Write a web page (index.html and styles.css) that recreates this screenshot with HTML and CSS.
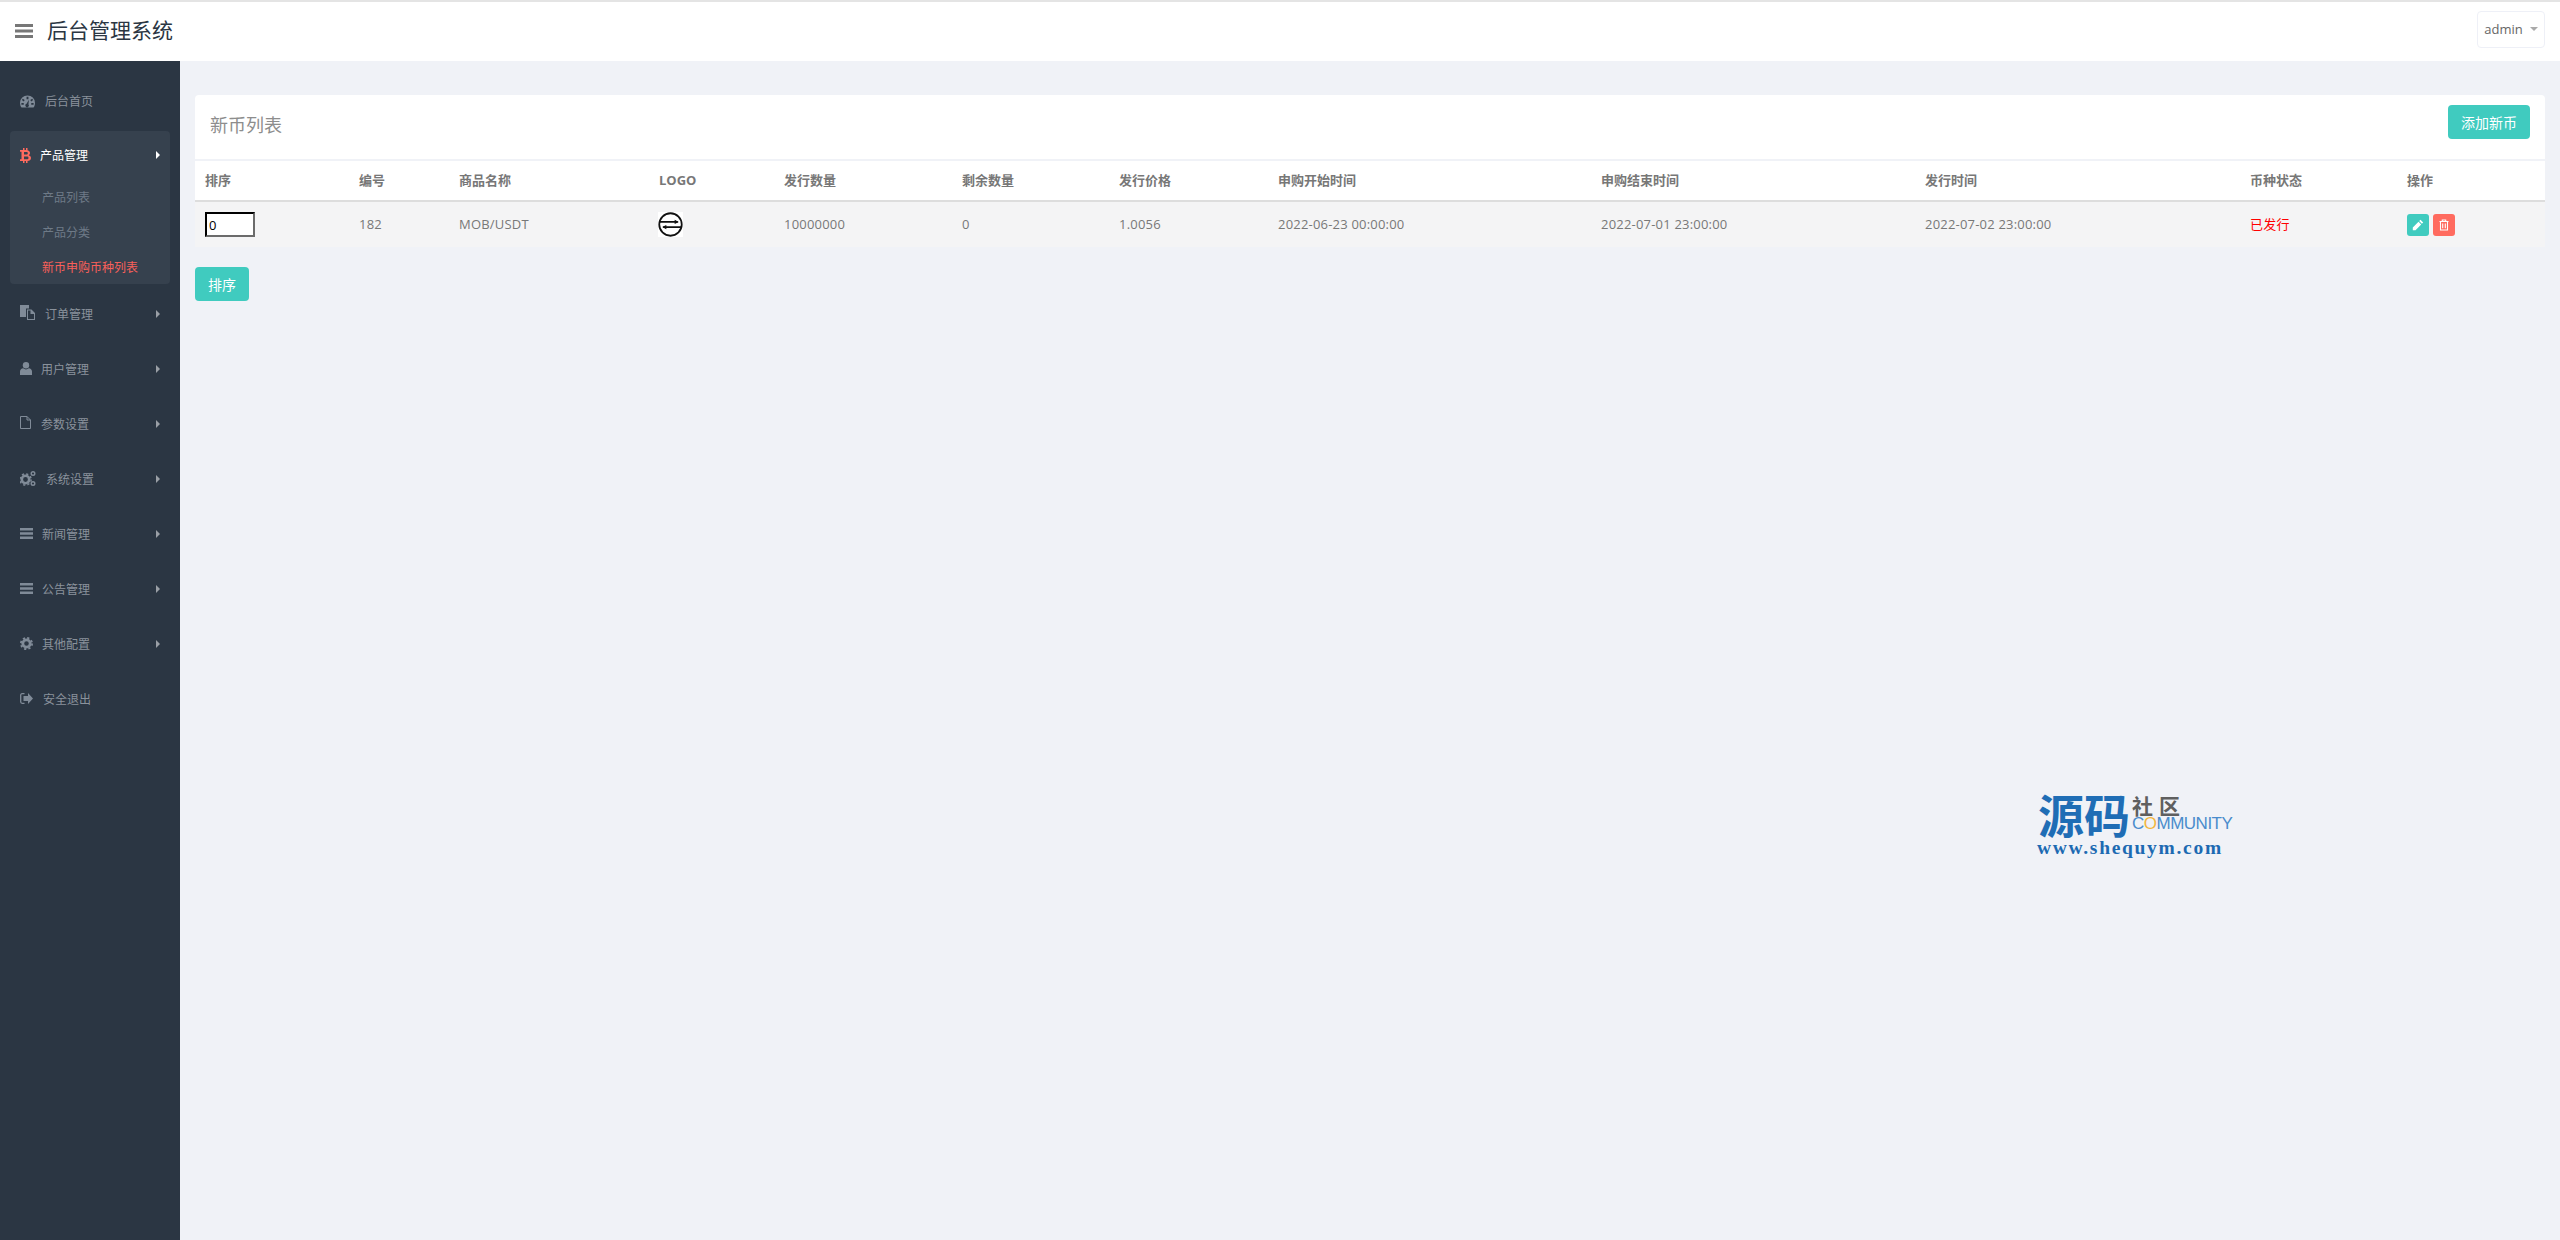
FILE: index.html
```html
<!DOCTYPE html>
<html lang="zh">
<head>
<meta charset="utf-8">
<title>后台管理系统</title>
<link rel="stylesheet" href="styles.css">
</head>
<body>
<header class="topbar">
  <div class="brand">
    <svg class="burger" viewBox="0 0 18 14"><path d="M0 0h18v3H0zM0 5.500h18v3H0zM0 11h18v3H0z"/></svg>
    <span class="brand-title">后台管理系统</span>
  </div>
  <button class="user-btn">admin<span class="caret"></span></button>
</header>
<div class="shell">
  <nav class="sidebar">
    <a class="item"><svg class="ico ico-dash" viewBox="0 0 16 13"><path fill-rule="evenodd" d="M8 0a8 8 0 0 1 8 8c0 2-.6 3.600-1.600 5H1.600A8 8 0 0 1 0 8a8 8 0 0 1 8-8zM7 1.500v2.500h2V1.500zM3 3.500 2 5l2 1.500 1-1.500zM13 3.500 11 5l1 1.500 2-1.500zM1.500 8v2H4V8zM12 8v2h2.500V8zM9.500 4.500 7 9a1.800 1.800 0 1 0 2 .6z"/></svg><span class="lbl l1">后台首页</span></a>
    <div class="group">
      <a class="item active"><svg class="ico ico-btc" viewBox="0 0 11 15"><path fill-rule="evenodd" d="M3 0h1.500v2H6V0h1.500v2.200C9.500 2.600 10 4 10 5c0 1-.5 1.800-1.200 2.200C10 7.600 11 8.600 11 10c0 2-1.500 2.800-3.500 3v2H6v-2H4.500v2H3v-2H0v-1.800h1.500V3.800H0V2h3zM4 4v2.500h2.500C7.300 6.500 7.800 6 7.800 5.200 7.800 4.500 7.300 4 6.500 4zM4 8.500v2.800h3c.9 0 1.500-.5 1.500-1.400S7.900 8.500 7 8.500z"/></svg><span class="lbl l2">产品管理</span><span class="arrow"></span></a>
      <a class="sub">产品列表</a>
      <a class="sub">产品分类</a>
      <a class="sub current">新币申购币种列表</a>
    </div>
    <a class="item"><svg class="ico ico-copy" viewBox="0 0 15 15"><path fill-rule="evenodd" d="M0 0h9v3.500H6V12H0zM7 4.500h4.500L15 8v7H7zM8 5.500v8.500h6V9h-3.500V5.500z"/></svg><span class="lbl l1">订单管理</span><span class="arrow"></span></a>
    <a class="item"><svg class="ico ico-user" viewBox="0 0 12 13"><circle cx="6" cy="3.200" r="3.200"/><path d="M0 13V9.500C0 7.500 1.500 6.500 3.200 6.300 4 7 5 7.400 6 7.400s2-.4 2.800-1.100C10.500 6.500 12 7.500 12 9.500V13z"/></svg><span class="lbl l3">用户管理</span><span class="arrow"></span></a>
    <a class="item"><svg class="ico ico-file" viewBox="0 0 11 13"><path d="M.5.500h6.500l3.500 3.500v8.500H.5zM7 .5V4h3.500" fill="none" stroke="currentColor"/></svg><span class="lbl l4">参数设置</span><span class="arrow"></span></a>
    <a class="item"><svg class="ico ico-cogs" viewBox="0 0 16 15"><circle cx="5.500" cy="8.500" r="3.700" fill="none" stroke="currentColor" stroke-width="2.600"/><circle cx="5.500" cy="8.500" r="5.600" fill="none" stroke="currentColor" stroke-width="1.500" stroke-dasharray="2.200 2.200"/><circle cx="13" cy="2.500" r="1.800" fill="none" stroke="currentColor" stroke-width="1.400"/><circle cx="13" cy="12.500" r="1.800" fill="none" stroke="currentColor" stroke-width="1.400"/></svg><span class="lbl l5">系统设置</span><span class="arrow"></span></a>
    <a class="item"><svg class="ico ico-bars" viewBox="0 0 13 11"><path d="M0 0h13v2.400H0zM0 4.300h13v2.400H0zM0 8.600h13V11H0z"/></svg><span class="lbl l6">新闻管理</span><span class="arrow"></span></a>
    <a class="item"><svg class="ico ico-bars" viewBox="0 0 13 11"><path d="M0 0h13v2.400H0zM0 4.300h13v2.400H0zM0 8.600h13V11H0z"/></svg><span class="lbl l6">公告管理</span><span class="arrow"></span></a>
    <a class="item"><svg class="ico ico-bars" viewBox="0 0 13 13"><circle cx="6.500" cy="6.500" r="3.700" fill="none" stroke="currentColor" stroke-width="2.800"/><circle cx="6.500" cy="6.500" r="5.600" fill="none" stroke="currentColor" stroke-width="1.800" stroke-dasharray="2.200 2.200"/></svg><span class="lbl l6">其他配置</span><span class="arrow"></span></a>
    <a class="item"><svg class="ico ico-exit" viewBox="0 0 13 11"><path d="M4.500.7H2.200C1.200.7.700 1.300.7 2.200v6.600c0 .9.500 1.500 1.500 1.500h2.300" fill="none" stroke="currentColor" stroke-width="1.300"/><path d="M8 0l5 5.500L8 11V8H3.500V3H8z"/></svg><span class="lbl l7">安全退出</span></a>
  </nav>
  <main class="content">
    <section class="card">
      <div class="card-head">
        <h2 class="card-title">新币列表</h2>
        <a class="btn btn-add">添加新币</a>
      </div>
      <table class="grid">
        <thead>
          <tr><th>排序</th><th>编号</th><th>商品名称</th><th>LOGO</th><th>发行数量</th><th>剩余数量</th><th>发行价格</th><th>申购开始时间</th><th>申购结束时间</th><th>发行时间</th><th>币种状态</th><th>操作</th></tr>
        </thead>
        <tbody>
          <tr>
            <td><input class="sort-input" type="text" value="0"></td>
            <td>182</td>
            <td>MOB/USDT</td>
            <td><svg class="coin" viewBox="0 0 24 24"><circle cx="12" cy="12" r="10.800" fill="none" stroke="#111" stroke-width="1.700"/><path d="M1.500 9.500h17.500M5 14.500h18" fill="none" stroke="#111" stroke-width="1.500"/><path d="M16 7.500l4 2-4 2zM8 12.500l-4 2 4 2z" fill="#111"/></svg></td>
            <td>10000000</td>
            <td>0</td>
            <td>1.0056</td>
            <td>2022-06-23 00:00:00</td>
            <td>2022-07-01 23:00:00</td>
            <td>2022-07-02 23:00:00</td>
            <td class="status">已发行</td>
            <td>
              <div class="ops">
                <a class="op op-edit"><svg viewBox="0 0 12 12"><path d="M8.500.8l2.700 2.700-1.300 1.300-2.700-2.700zM6.500 2.800l2.700 2.700-5.700 5.700H.8V8.500z" fill="#fff"/></svg></a>
                <a class="op op-del"><svg viewBox="0 0 12 12"><path d="M1.500 2.500h9M4.300 2.500V1h3.400v1.500M2.500 2.500V11h7V2.500M4.700 4.500v4.800M7.300 4.500v4.800" fill="none" stroke="#fff" stroke-width="1.100"/></svg></a>
              </div>
            </td>
          </tr>
        </tbody>
      </table>
    </section>
    <a class="btn btn-sort">排序</a>
  </main>
</div>
<div class="watermark">
  <div class="wm-top">
    <span class="wm-big">源码</span>
    <div class="wm-side">
      <span class="wm-she">社区</span>
      <span class="wm-com">C<b>O</b>MMUNITY</span>
    </div>
  </div>
  <div class="wm-url">www.shequym.com</div>
</div>
</body>
</html>
```
FILE: styles.css
```css
* { box-sizing: border-box; }
html, body { margin: 0; height: 100%; }
body {
  background: #f0f2f7;
  color: #777;
  font: 12px/1.5 "Open Sans", "Noto Sans CJK SC", sans-serif;
  height: 1240px;
  overflow: hidden;
  position: relative;
}
a { text-decoration: none; }

.topbar {
  height: 61px;
  background: #fff;
  border-top: 2px solid #e4e4e4;
  display: flex;
  align-items: center;
  justify-content: space-between;
  padding: 0 15px;
}
.brand { display: flex; align-items: center; }
.burger { width: 18px; height: 14px; fill: #777; margin-top: -1px; }
.brand-title { margin-left: 14px; font-size: 21px; color: #2b3643; line-height: 1; margin-top: -2px; }
.user-btn {
  width: 68px; height: 37px;
  margin-top: -5px;
  background: #fff;
  border: 1px solid #eef0f7;
  border-radius: 4px;
  color: #666;
  font: 13px "Open Sans", sans-serif;
  display: flex; align-items: center; justify-content: center;
  padding: 0;
}
.caret {
  margin-left: 7px;
  border-top: 4px solid #aaa;
  border-left: 4px solid transparent;
  border-right: 4px solid transparent;
}

.shell { display: flex; height: 1179px; }
.sidebar {
  width: 180px;
  flex: none;
  background: #2b3643;
  padding-top: 13px;
  color: #808b98;
}
.item {
  height: 55px;
  display: flex;
  align-items: center;
  padding-left: 20px;
  padding-right: 20px;
  position: relative;
  color: #8a929c;
}
.lbl { line-height: 1; }
.ico { fill: currentColor; color: #808b98; flex: none; }
.ico-dash { width: 15px; height: 13px; }
.ico-btc { width: 11px; height: 15px; }
.ico-copy { width: 15px; height: 15px; margin-top: -4px; }
.ico-user { width: 12px; height: 13px; margin-top: -3px; }
.ico-file { width: 11px; height: 13px; margin-top: -4px; }
.ico-cogs { width: 16px; height: 15px; margin-top: -3px; }
.ico-bars { width: 13px; height: 13px; margin-top: -3px; }
.ico-exit { width: 13px; height: 11px; margin-top: -3px; }
.l1 { margin-left: 10px; }
.l2 { margin-left: 9px; margin-top: 1px; }
.l3 { margin-left: 9px; margin-top: 1px; }
.l4 { margin-left: 10px; margin-top: 1px; }
.l5 { margin-left: 10px; margin-top: 1px; }
.l6 { margin-left: 9px; margin-top: 1px; }
.l7 { margin-left: 10px; margin-top: 1px; }
.arrow {
  position: absolute;
  right: 20px;
  top: 50%;
  margin-top: -5px;
  border-left: 4px solid #9a9fa6;
  border-top: 4px solid transparent;
  border-bottom: 4px solid transparent;
}
.group {
  margin: 2px 10px 3px;
  height: 153px;
  background: #36414e;
  border-radius: 4px;
}
.group .item { padding-left: 10px; padding-right: 10px; height: 49px; }
.group .arrow { right: 10px; border-left-color: #fff; }
.item.active { color: #fff; }
.item.active .ico { color: #ff6b5f; }
.sub {
  display: flex;
  align-items: center;
  height: 35px;
  padding-left: 32px;
  color: #6e7a87;
  line-height: 1;
}
.sub.current { color: #f9605a; }

.content { flex: 1; min-width: 0; padding: 34px 15px 0; }
.card { background: #fff; border-radius: 4px 4px 0 0; }
.card-head {
  height: 66px;
  display: flex;
  align-items: center;
  justify-content: space-between;
  padding: 0 15px;
  border-bottom: 2px solid #f0f2f7;
}
.card-title { margin: -4px 0 0; font-size: 18px; font-weight: 400; color: #8d8d8d; line-height: 1; }
.btn {
  display: inline-flex;
  align-items: center;
  justify-content: center;
  background: #40cbbf;
  color: #fff;
  border-radius: 4px;
  font-size: 14px;
}
.btn-add { width: 82px; height: 34px; margin-top: -10px; }
.btn-sort { width: 54px; height: 34px; margin-top: 20px; }

.grid { width: 100%; border-collapse: collapse; table-layout: fixed; font-size: 13px; }
.grid th:nth-child(1) { width: 154px; }
.grid th:nth-child(2) { width: 100px; }
.grid th:nth-child(3) { width: 200px; }
.grid th:nth-child(4) { width: 125px; }
.grid th:nth-child(5) { width: 178px; }
.grid th:nth-child(6) { width: 157px; }
.grid th:nth-child(7) { width: 159px; }
.grid th:nth-child(8) { width: 323px; }
.grid th:nth-child(9) { width: 324px; }
.grid th:nth-child(10) { width: 325px; }
.grid th:nth-child(11) { width: 157px; }
.grid th {
  height: 40px;
  padding: 0 10px;
  text-align: left;
  font-weight: 700;
  color: #777;
  border-bottom: 2px solid #ddd;
}
.grid td {
  height: 46px;
  padding: 0 10px;
  background: #f4f4f5;
  color: #787878;
  vertical-align: middle;
  letter-spacing: .2px;
  white-space: nowrap;
}
.grid td.status { color: #f00; }
.sort-input {
  display: block;
  width: 50px; height: 25px;
  padding: 1px 2px;
  border: 2px inset #767676;
  border-color: #222 #6b6b6b #6b6b6b #222;
  background: #fff;
  color: #000;
  font: 13px "Open Sans", sans-serif;
}
.coin { display: block; width: 25px; height: 25px; margin-left: -1px; background: #fff; }
.ops { display: flex; gap: 4px; }
.op {
  width: 22px; height: 22px;
  border-radius: 3px;
  display: flex; align-items: center; justify-content: center;
}
.op svg { width: 12px; height: 12px; }
.op-edit { background: #40cbbf; }
.op-del { background: #ff6b5f; }

.watermark {
  position: absolute;
  left: 2037px;
  top: 790px;
  width: 200px;
  color: #1c6ab2;
}
.wm-top { display: flex; align-items: center; height: 46px; }
.wm-big { font-size: 46px; font-weight: 700; line-height: 46px; margin-left: 1px; font-family: "Noto Sans CJK SC", sans-serif; color: #1f6db5; flex: none; }
.wm-side { display: flex; flex-direction: column; margin-left: 2px; gap: 2px; flex: none; }
.wm-she { font-size: 21px; font-weight: 700; color: #5f5f5f; line-height: 20px; letter-spacing: 6px; font-family: "Noto Sans CJK SC", sans-serif; }
.wm-com { font: 400 17px/14px "Liberation Sans", sans-serif; color: #4a8ccc; letter-spacing: -.5px; }
.wm-com b { font-weight: 400; color: #f3b63f; }
.wm-url { font: 700 19.500px/20px "Liberation Serif", serif; color: #1c6ab2; letter-spacing: 1.700px; margin-top: 2px; white-space: nowrap; }
```
